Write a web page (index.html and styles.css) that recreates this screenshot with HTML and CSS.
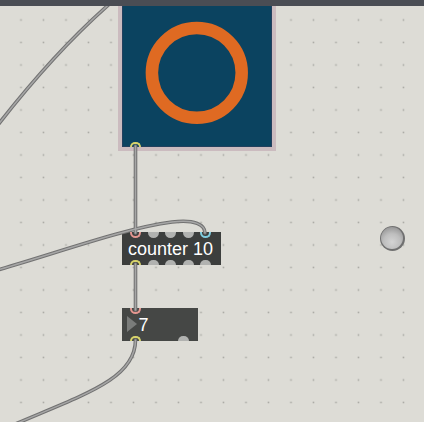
FILE: index.html
```html
<!DOCTYPE html>
<html>
<head>
<meta charset="utf-8">
<link rel="stylesheet" href="styles.css">
</head>
<body>
<div class="window">
  <div class="titlebar"></div>
  <div class="canvas">
    <svg class="layer grid" viewBox="0 6 424 416" width="424" height="416">
      <defs>
        <pattern id="dots" patternUnits="userSpaceOnUse" x="0" y="0" width="22.5" height="22.5">
          <rect x="20.2" y="19.2" width="1.6" height="1.6" fill="#a9a9a4"/>
        </pattern>
      </defs>
      <rect x="0" y="6" width="424" height="416" fill="url(#dots)"/>
    </svg>

    <div class="node panel">
      <div class="panel-art">
        <svg viewBox="0 0 150 148" width="150" height="148">
          <circle cx="74.8" cy="73.8" r="44.9" fill="none" stroke="#df6a22" stroke-width="12.5"/>
        </svg>
      </div>
      <div class="ports ports-panel">
        <span class="port ring out yellow"></span>
      </div>
    </div>

    <div class="node box counter">
      <div class="ports">
        <span class="port ring in pink"></span>
        <span class="port dome in"></span>
        <span class="port dome in"></span>
        <span class="port dome in"></span>
        <span class="port ring in cyan"></span>
      </div>
      <div class="label">counter 10</div>
      <div class="ports">
        <span class="port ring out yellow"></span>
        <span class="port dome out"></span>
        <span class="port dome out"></span>
        <span class="port dome out"></span>
        <span class="port dome out"></span>
      </div>
    </div>

    <div class="node box number">
      <div class="ports">
        <span class="port ring in pink"></span>
      </div>
      <div class="label num-row"><span class="arrow"></span><span class="value">7</span></div>
      <div class="ports ports-spread">
        <span class="port ring out yellow"></span>
        <span class="port dome out"></span>
      </div>
    </div>

    <div class="node led"><span class="led-inner"></span></div>

    <svg class="layer cables" viewBox="0 6 424 416" width="424" height="416">
      <g fill="none" stroke-linecap="round">
        <g stroke="#727272" stroke-width="3.6">
          <path d="M -6 130 Q 54 52 114 0"/>
          <path d="M 135.5 146 L 135.5 233"/>
          <path d="M -6 271 C 60 252, 125 228, 172 222 C 195 219, 205 225, 205 233"/>
          <path d="M 135.5 264 L 135.5 310"/>
          <path d="M 135.5 340 C 135.5 380, 82 395, 6 428"/>
        </g>
        <g stroke="#a6a6a6" stroke-width="1.5">
          <path d="M -6 130 Q 54 52 114 0"/>
          <path d="M 135.5 146 L 135.5 233"/>
          <path d="M -6 271 C 60 252, 125 228, 172 222 C 195 219, 205 225, 205 233"/>
          <path d="M 135.5 264 L 135.5 310"/>
          <path d="M 135.5 340 C 135.5 380, 82 395, 6 428"/>
        </g>
      </g>
    </svg>
  </div>
</div>
</body>
</html>
```

FILE: styles.css
```css
html, body {
  margin: 0;
  padding: 0;
  background: #dddcd6;
}

.window {
  width: 424px;
  height: 422px;
  display: flex;
  flex-direction: column;
  overflow: hidden;
}

.titlebar {
  height: 6px;
  flex: none;
  background: #4a4d54;
  position: relative;
  z-index: 10;
}

.canvas {
  flex: 1;
  position: relative;
  overflow: hidden;
  background: #dddcd6;
  font-family: "Liberation Sans", Arial, sans-serif;
}

.layer {
  position: absolute;
  left: 0;
  top: 0;
  display: block;
}

.cables {
  z-index: 3;
  pointer-events: none;
}

.node {
  position: absolute;
  box-sizing: border-box;
}

/* jsui / panel with ring */
.panel {
  left: 118px;
  top: -11px;
  width: 158px;
  height: 156px;
  border: 4px solid #cbbbbf;
  background: #0b4360;
  box-shadow: inset 0 0 0 1px #23405e;
  display: flex;
  flex-direction: column;
}

.panel-art {
  flex: 1;
  display: flex;
}

.panel-art svg {
  display: block;
}

.ports-panel {
  margin-top: -5.5px;
}

/* ports */
.ports {
  height: 5.5px;
  display: flex;
  gap: 6.5px;
  padding-left: 8px;
  flex: none;
  position: relative;
  z-index: 4;
}

.ports-spread {
  justify-content: space-between;
  padding-right: 9.5px;
  gap: 0;
}

.port {
  display: block;
  width: 11px;
  height: 5.5px;
  box-sizing: border-box;
  flex: none;
}

.port.dome {
  background: #b1b2b0;
}

.port.dome.in {
  border-radius: 0 0 5.5px 5.5px;
}

.port.dome.out {
  border-radius: 5.5px 5.5px 0 0;
}

.port.ring {
  border-style: solid;
  border-width: 2px;
}

.port.ring.in {
  border-top-width: 0;
  border-radius: 0 0 5.5px 5.5px;
}

.port.ring.out {
  border-bottom-width: 0;
  border-radius: 5.5px 5.5px 0 0;
}

.port.pink { border-color: #e39690; }
.port.cyan { border-color: #80cde0; }
.port.yellow { border-color: #d7d36b; }

/* object boxes */
.box {
  display: flex;
  flex-direction: column;
  color: #ffffff;
  font-size: 18px;
  line-height: 20px;
}

.box .label {
  flex: 1;
  display: flex;
  align-items: center;
  white-space: nowrap;
}

.counter {
  left: 122px;
  top: 226px;
  width: 99px;
  height: 33px;
  background: #3c3e3d;
}

.counter .label {
  padding-left: 6px;
}

.number {
  left: 122px;
  top: 302px;
  width: 76px;
  height: 33px;
  background: #454745;
}

.num-row {
  padding-left: 5px;
}

.arrow {
  width: 0;
  height: 0;
  border-left: 10px solid #7a7c7a;
  border-top: 8px solid transparent;
  border-bottom: 8px solid transparent;
  margin-top: -1px;
}

.value {
  margin-left: 1.5px;
}

/* led */
.led {
  left: 379.5px;
  top: 219.5px;
  width: 25.5px;
  height: 25.5px;
  border-radius: 50%;
  background: #707070;
  padding: 1.8px;
  display: flex;
}

.led-inner {
  flex: 1;
  border-radius: 50%;
  background: radial-gradient(circle at 50% 68%, #d4d4d4 0%, #bebebe 45%, #939393 85%, #858585 100%);
}
```
